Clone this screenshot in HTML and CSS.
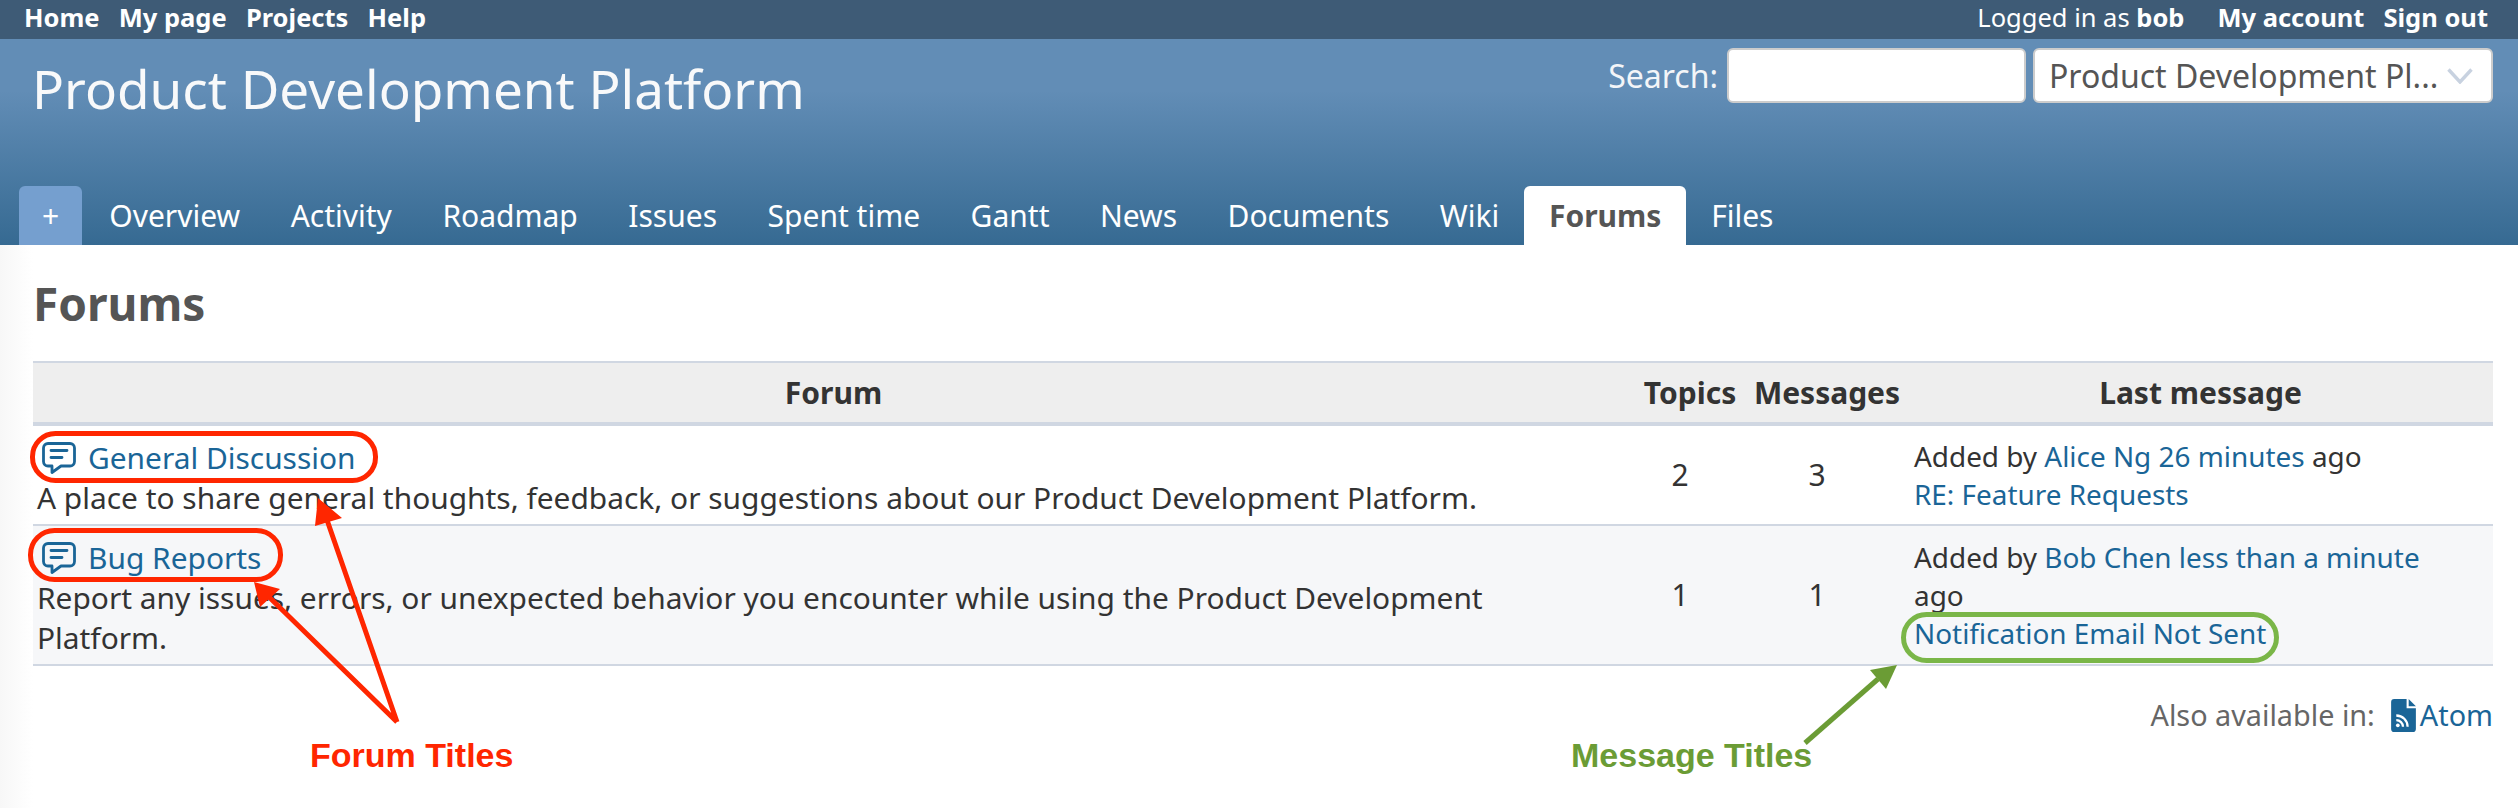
FILE: index.html
```html
<!DOCTYPE html>
<html lang="en">
<head>
<meta charset="utf-8">
<title>Forums - Product Development Platform</title>
<link rel="stylesheet" href="styles.css">
</head>
<body>
<nav class="top-menu">
  <ul class="top-links">
    <li><a href="#">Home</a></li>
    <li><a href="#">My page</a></li>
    <li><a href="#">Projects</a></li>
    <li><a href="#">Help</a></li>
  </ul>
  <div class="account">
    <span class="logged">Logged in as <b>bob</b></span>
    <a href="#" class="acc-link">My account</a>
    <a href="#" class="acc-link">Sign out</a>
  </div>
</nav>
<header class="header">
  <div class="header-row">
    <h1 class="title">Product Development Platform</h1>
    <form class="search">
      <label class="search-label">Search:</label>
      <input class="search-input" type="text">
      <div class="select-wrap">
        <select class="project-select"><option>Product Development Pl...</option></select>
        <svg class="chevron" viewBox="0 0 26 16" aria-hidden="true"><path d="M1.500 1.500 L13 14 L24.500 1.500" fill="none" stroke="#c8d2e0" stroke-width="3.400"/></svg>
      </div>
    </form>
  </div>
  <ul class="tabs">
    <li class="tab tab-new"><a href="#">+</a></li>
    <li class="tab"><a href="#">Overview</a></li>
    <li class="tab"><a href="#">Activity</a></li>
    <li class="tab"><a href="#">Roadmap</a></li>
    <li class="tab"><a href="#">Issues</a></li>
    <li class="tab"><a href="#">Spent time</a></li>
    <li class="tab"><a href="#">Gantt</a></li>
    <li class="tab"><a href="#">News</a></li>
    <li class="tab"><a href="#">Documents</a></li>
    <li class="tab"><a href="#">Wiki</a></li>
    <li class="tab tab-active"><a href="#">Forums</a></li>
    <li class="tab"><a href="#">Files</a></li>
  </ul>
</header>
<main class="content">
  <h2 class="page-title">Forums</h2>
  <table class="boards">
    <colgroup>
      <col class="col-forum"><col class="col-topics"><col class="col-messages"><col class="col-last">
    </colgroup>
    <thead>
      <tr><th>Forum</th><th>Topics</th><th>Messages</th><th>Last message</th></tr>
    </thead>
    <tbody>
      <tr>
        <td class="name">
          <a href="#" class="board-link"><svg class="chat" viewBox="0 0 34 32" aria-hidden="true"><use href="#chat-icon"/></svg>General Discussion</a>
          A place to share general thoughts, feedback, or suggestions about our Product Development Platform.
        </td>
        <td class="num">2</td>
        <td class="num">3</td>
        <td class="last">Added by <a href="#">Alice Ng</a> <a href="#">26 minutes</a> ago<br><a href="#">RE: Feature Requests</a></td>
      </tr>
      <tr class="even">
        <td class="name">
          <a href="#" class="board-link"><svg class="chat" viewBox="0 0 34 32" aria-hidden="true"><use href="#chat-icon"/></svg>Bug Reports</a>
          Report any issues, errors, or unexpected behavior you encounter while using the Product Development Platform.
        </td>
        <td class="num">1</td>
        <td class="num">1</td>
        <td class="last">Added by <a href="#">Bob Chen</a> <a href="#">less than a minute</a> ago<br><a href="#">Notification Email Not Sent</a></td>
      </tr>
    </tbody>
  </table>
  <p class="other-formats">Also available in:<a href="#" class="atom"><svg class="feed" viewBox="0 0 24 32" aria-hidden="true"><path d="M3 0H15V9H24V29A3 3 0 0 1 21 32H3A3 3 0 0 1 0 29V3A3 3 0 0 1 3 0Z" fill="#1a6597"/><path d="M17 0L24 7H17Z" fill="#1a6597"/><path d="M5 16A11 11 0 0 1 16 27M5 20.500A6.500 6.500 0 0 1 11.500 27" fill="none" stroke="#fff" stroke-width="2.200"/><circle cx="6.500" cy="25.500" r="1.800" fill="#fff"/></svg>Atom</a></p>
</main>

<svg class="defs" aria-hidden="true"><defs>
  <symbol id="chat-icon" viewBox="0 0 34 32">
    <path d="M6 1.500H28A4.500 4.500 0 0 1 32.500 6V19.500A4.500 4.500 0 0 1 28 24H19L10 30.500V24H6A4.500 4.500 0 0 1 1.500 19.500V6A4.500 4.500 0 0 1 6 1.500Z" fill="none" stroke="#1a6597" stroke-width="2.800" stroke-linejoin="round"/>
    <path d="M9 8.500H25M9 15.500H20" fill="none" stroke="#1a6597" stroke-width="2.800" stroke-linecap="round"/>
  </symbol>
</defs></svg>

<svg class="annotations" viewBox="0 0 2518 808" aria-hidden="true">
  <g fill="none" stroke="#ff2600" stroke-width="5">
    <rect x="32.500" y="433.500" width="343" height="47" rx="23"/>
    <rect x="30.500" y="530.500" width="250" height="49" rx="24"/>
    <path d="M397 722L327 520M397 722L268 596"/>
  </g>
  <path d="M318 498L342 518L315 526Z M254 582L280 589L260 607Z" fill="#ff2600"/>
  <rect x="1903.500" y="614.500" width="373" height="46" rx="23" fill="none" stroke="#7ab648" stroke-width="5"/>
  <path d="M1805 743L1878 679" fill="none" stroke="#6b9c35" stroke-width="5"/>
  <path d="M1897 665L1870 670L1886 689Z" fill="#6b9c35"/>
</svg>
<span class="note note-red">Forum Titles</span>
<span class="note note-green">Message Titles</span>
</body>
</html>
```
FILE: styles.css
```css
* { box-sizing: border-box; }
html, body { margin: 0; padding: 0; }
body {
  position: relative;
  width: 2518px;
  height: 808px;
  overflow: hidden;
  background: #fff;
  color: #333;
  font-family: "Noto Sans", "Liberation Sans", sans-serif;
  font-size: 30px;
}
a { color: #1a6597; text-decoration: none; }
ul { list-style: none; margin: 0; padding: 0; }

.top-menu {
  display: flex;
  justify-content: space-between;
  align-items: center;
  height: 39px;
  padding: 0 30px 6px 24px;
  background: #3e5b76;
  color: #fff;
  font-size: 25.500px;
}
.top-menu a { color: #fff; font-weight: 700; }
.top-links { display: flex; gap: 19.200px; }
.account { display: flex; }
.logged { margin-right: 33px; }
.acc-link { margin-left: 19px; }
.acc-link:first-of-type { margin-left: 0; }

.header {
  display: flex;
  flex-direction: column;
  justify-content: space-between;
  height: 206px;
  padding: 9px 25px 0 19px;
  background: linear-gradient(#628db6 0%, #628db6 25%, #366a92 100%);
  color: #fff;
}
.header-row { display: flex; justify-content: space-between; }
.title {
  margin: 6px 0 0 13px;
  font-size: 53px;
  font-weight: 400;
  line-height: 70px;
  color: #f8f9fa;
}
.search { display: flex; align-items: flex-start; font-size: 32px; }
.search-label { margin-right: 9px; line-height: 56px; color: #f3f5f8; }
.search-input {
  width: 299px;
  height: 55px;
  margin: 0 7px 0 0;
  border: 2px solid #ccc;
  border-radius: 6px;
  background: #fff;
}
.select-wrap { position: relative; width: 460px; height: 55px; }
.project-select {
  width: 100%;
  height: 100%;
  padding: 0 0 0 14px;
  border: 2px solid #ccc;
  border-radius: 6px;
  background: #fff;
  color: #555;
  font: inherit;
  appearance: none;
}
.chevron { position: absolute; top: 20px; right: 20px; width: 26px; height: 16px; }

.tabs { display: flex; align-items: flex-end; }
.tab a {
  display: block;
  height: 59px;
  padding: 0 25.250px;
  color: #fff;
  line-height: 59px;
}
.tab-new a {
  width: 63px;
  padding: 0;
  border-radius: 6px 6px 0 0;
  background: #759fcf;
  text-align: center;
  margin-right: 2px;
}
.tab-active a {
  padding: 0 24.500px;
  border-radius: 6px 6px 0 0;
  background: #fff;
  color: #555;
  font-weight: 700;
}

.content {
  height: 563px;
  padding: 0 25px 0 33px;
  background: linear-gradient(90deg, #f7f7f7, #fff 33px);
}
.page-title {
  margin: 0;
  padding-top: 30px;
  height: 116px;
  color: #555;
  font-size: 46px;
  font-weight: 700;
  line-height: 57px;
}
.boards {
  width: 100%;
  table-layout: fixed;
  border-collapse: collapse;
  border-top: 2px solid #d0d7e2;
  background: #fff;
}
.col-forum { width: 1601px; }
.col-topics { width: 112px; }
.col-messages { width: 162px; }
.boards th {
  height: 62px;
  padding: 0;
  background: #eee;
  border-bottom: 4px solid #d0d7e2;
  font-weight: 700;
}
.boards td { padding: 12px 30px 6px 4px; border-bottom: 2px solid #d0d7e2; font-size: 29.900px; line-height: 40px; }
.boards .even td { background: #f6f7f9; }
.board-link { display: flex; align-items: center; height: 40px; padding-left: 5px; }
.chat { width: 34px; height: 32px; margin-right: 12px; }
.boards .num { padding: 0 24px 0 4px; font-size: 30px; text-align: center; }
.boards .last { padding: 0 40px 0 6px; font-size: 27.900px; line-height: 38px; }
.other-formats {
  display: flex;
  justify-content: flex-end;
  align-items: center;
  margin: 29px 0 0;
  color: #666;
  font-size: 28.800px;
  line-height: 40px;
}
.atom { display: inline-flex; align-items: center; margin-left: 16px; }
.feed { width: 25px; height: 33px; margin-right: 4px; }

.defs { position: absolute; width: 0; height: 0; }
.annotations { position: absolute; left: 0; top: 0; width: 2518px; height: 808px; pointer-events: none; }
.note {
  position: absolute;
  font-family: "Liberation Sans", Arial, sans-serif;
  font-size: 34px;
  font-weight: 700;
  line-height: 38px;
}
.note-red { left: 310px; top: 736px; color: #ff2600; }
.note-green { left: 1571px; top: 736px; color: #6b9c35; }
```
